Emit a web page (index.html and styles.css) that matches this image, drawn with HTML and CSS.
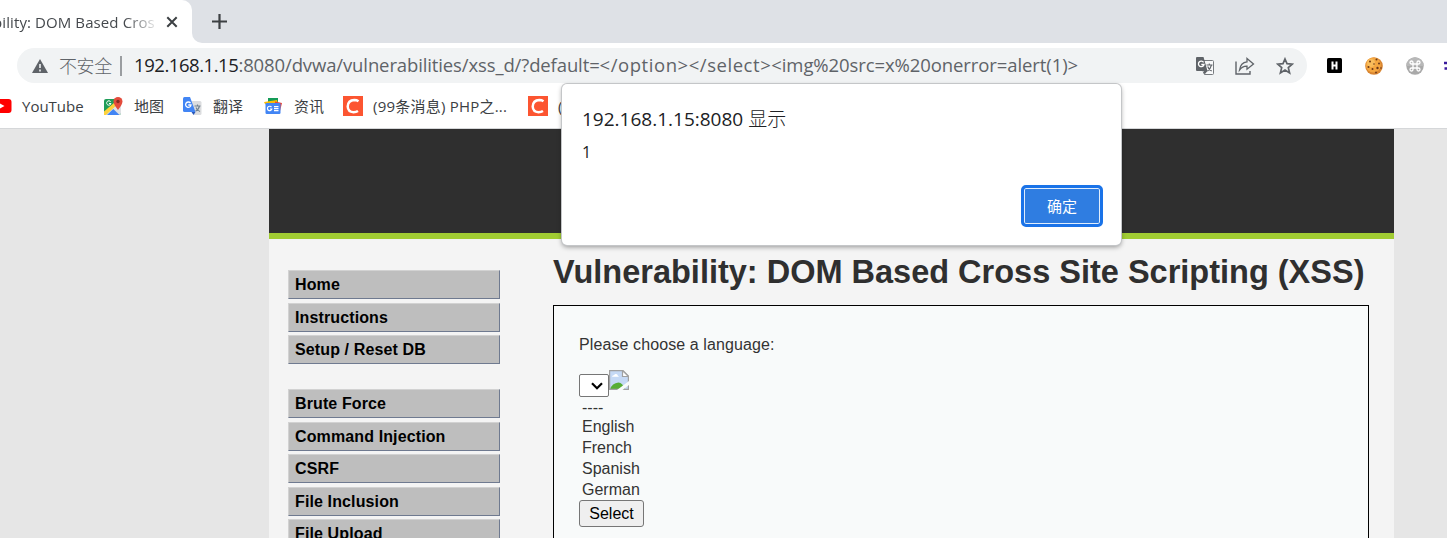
FILE: index.html
```html
<!DOCTYPE html>
<html lang="zh-CN">
<head>
<meta charset="utf-8">
<title>Vulnerability: DOM Based Cross Site Scripting (XSS)</title>
<link rel="stylesheet" href="styles.css">
</head>
<body>
<div class="tabstrip">
  <div class="tab">
    <div class="tab-title"><span>bility: DOM Based Cros</span></div>
    <svg class="tab-close" width="12" height="12" viewBox="0 0 12 12"><path d="M1.3 1.3 10.7 10.7M10.7 1.3 1.3 10.7" stroke="#3c4043" stroke-width="2" fill="none"/></svg>
  </div>
  <div class="strip-rest">
    <svg width="15" height="15" viewBox="0 0 15 15"><path d="M7.5 0v15M0 7.5h15" stroke="#3c4043" stroke-width="2.2" fill="none"/></svg>
  </div>
</div>

<div class="toolbar">
  <div class="omnibox">
    <svg class="warn" width="16" height="14" viewBox="0 0 16 14"><path d="M8 0 16 14H0z" fill="#5f6368"/><path d="M8 5v4M8 10.5v2" stroke="#f1f3f4" stroke-width="1.6"/></svg>
    <span class="insecure">不安全</span>
    <span class="divider"></span>
    <span class="url"><span class="host">192.168.1.15</span><span class="path">:8080/dvwa/vulnerabilities/xss_d/?default=</span><span class="close-tags">&lt;/option&gt;&lt;/select&gt;</span><span class="payload">&lt;img%20src=x%20onerror=alert(1)&gt;</span></span>
    <div class="actions">
      <svg width="18" height="18" viewBox="0 0 18 18"><path d="M8 3.5h8.5q1 0 1 1v12q0 1-1 1H8.500l-1.500-3" fill="#f8f9fa" stroke="#777b7f"/><path d="M1 0h6.500l4 14H1q-1 0-1-1V1q0-1 1-1z" fill="#5f6368"/><path d="M7.500 14h4L8.500 17.500z" fill="#5f6368"/><path d="M7.600 5.300A2.800 2.800 0 1 0 8 7.500H5.300" fill="none" stroke="#fff" stroke-width="1.300"/><path d="M10.500 8h6M13.300 6.500V8M15.500 8q-1 4-4 6M11.700 9.500q1 3 4 4.500" fill="none" stroke="#5f6368" stroke-width="1.100"/></svg>
      <svg width="20" height="18" viewBox="0 0 20 18"><path d="M1 4.500V17h14v-3" fill="none" stroke="#5f6368" stroke-width="1.400"/><path d="M12 1.500 18.500 7 12 12.200V9.200Q7.500 9 4.500 13 5.500 5.500 12 4.800z" fill="none" stroke="#5f6368" stroke-width="1.300"/></svg>
      <svg width="18" height="18" viewBox="0 0 18 18"><path d="M9 2 11 6.700 16.300 7.200 12.300 10.600 13.600 16 9 13.100 4.400 16 5.700 10.600 1.700 7.200 7 6.700z" fill="none" stroke="#5f6368" stroke-width="1.700"/></svg>
    </div>
  </div>
  <div class="extensions">
    <svg width="15" height="15" viewBox="0 0 15 15"><rect width="15" height="15" rx="1.500" fill="#000"/><path d="M5.500 3.500v8M9.500 3.500v8M5.500 7.500h4" stroke="#fff" stroke-width="2" fill="none"/></svg>
    <svg width="18" height="18" viewBox="0 0 18 18"><circle cx="9" cy="9" r="8.800" fill="#d98632"/><circle cx="8.300" cy="8" r="7.500" fill="#f4a640"/><circle cx="6" cy="6" r="4" fill="#f9bd5c"/><g fill="#6b3717"><circle cx="5" cy="4.500" r="1"/><circle cx="11.500" cy="2.500" r="1"/><circle cx="9" cy="7" r=".8"/><circle cx="14" cy="6.500" r="1"/><circle cx="3.500" cy="10" r="1"/><circle cx="7.500" cy="12" r="1"/><circle cx="12.500" cy="11" r="1.200"/><circle cx="11" cy="15.500" r=".9"/><circle cx="16" cy="11" r=".8"/></g></svg>
    <svg width="18" height="18" viewBox="0 0 18 18"><circle cx="9" cy="9" r="8.700" fill="#a9a9a9"/><path d="M.3 9a8.700 8.700 0 0 1 17.400 0z" fill="#b8b8b8"/><path d="M7 7h4v4H7zM7 7H5.500A1.500 1.500 0 1 1 7 5.500zM11 7V5.500A1.500 1.500 0 1 1 12.500 7zM11 11h1.500a1.500 1.500 0 1 1-1.500 1.500zM7 11v1.500A1.500 1.500 0 1 1 5.500 11z" fill="none" stroke="#fff" stroke-width="1.300"/></svg>
    <svg class="ext-cut" width="3" height="12" viewBox="0 0 3 12"><path d="M0 3h3M.5 8.500h2.500" stroke="#3a1a9c" stroke-width="2.500"/></svg>
  </div>
</div>

<div class="bookmarks">
  <svg class="yt" width="12" height="14" viewBox="0 0 12 14"><rect x="-8" width="19.500" height="14" rx="3" fill="#f00"/><path d="M-1 4 4.500 7-1 10z" fill="#fff"/></svg>
  <span class="bm bm-youtube">YouTube</span>
  <svg class="i-map" width="19" height="19" viewBox="0 0 19 19"><rect x="0" y="2" width="17" height="16" rx="2" fill="#1f9d58"/><path d="M0 18 17 3v13q0 2-2 2z" fill="#dfe1e5"/><path d="M0 14.500 14 2.500 16 5 2 18H0z" fill="#fdd23c"/><path d="M3 18 9.300 12 15.500 18z" fill="#4285f4"/><path d="M6.700 4.800A2.200 2.200 0 1 0 7 6.500H5" fill="none" stroke="#fff"/><path d="M14 0a4.500 4.500 0 0 1 4.500 4.500Q18.300 7.500 14 13 9.700 7.500 9.500 4.500A4.500 4.500 0 0 1 14 0z" fill="#e34b3c"/><circle cx="14" cy="4.500" r="1.700" fill="#852b21"/></svg>
  <span class="bm bm-map">地图</span>
  <svg class="i-tr" width="19" height="19" viewBox="0 0 19 19"><path d="M7 4h10q1.500 0 1.500 1.500v11q0 1.500-1.500 1.500H11z" fill="#dcdddf"/><path d="M1.500 0H7l5.500 15h-11Q0 15 0 13.500v-12Q0 0 1.500 0z" fill="#4285f4"/><path d="M8.500 15h4L10.500 18z" fill="#2857b8"/><path d="M7.500 6.100A2.700 2.700 0 1 0 8 8H5.300" fill="none" stroke="#fff" stroke-width="1.300"/><path d="M11.500 9h6M14.500 7.500V9M16.500 9q-1 4-4 5M13 10.500q1 3 4 4" fill="none" stroke="#71828f" stroke-width="1.100"/></svg>
  <span class="bm bm-tr">翻译</span>
  <svg class="i-news" width="18" height="16" viewBox="0 0 18 16"><path d="M4 0h10v7H4z" fill="#159c58"/><path d="M0 4 13 2l1 4H1z" fill="#fbbc04"/><path d="M11 3.500 18 5l-2 8h-5z" fill="#ea4335"/><rect x="1.500" y="5" width="15" height="11" rx="1.200" fill="#4285f4"/><path d="M7.500 9.200A2.200 2.200 0 1 0 7.800 11H6M10 8.700h4.500M10 10.700h4.500M10 12.700h4.500" fill="none" stroke="#fff" stroke-width="1.200"/></svg>
  <span class="bm bm-news">资讯</span>
  <svg class="i-c" width="20" height="20" viewBox="0 0 20 20"><rect width="20" height="20" fill="#fc5531"/><path d="M15.500 5.200Q13.700 4 11.300 4 5 4.300 4.700 10.500 5 16 10.500 16.200q2.700 0 4.500-1.200" fill="none" stroke="#fff" stroke-width="2.500"/></svg>
  <span class="bm bm-php">(99条消息) PHP之...</span>
  <svg class="i-c" width="20" height="20" viewBox="0 0 20 20"><rect width="20" height="20" fill="#fc5531"/><path d="M15.500 5.200Q13.700 4 11.300 4 5 4.300 4.700 10.500 5 16 10.500 16.200q2.700 0 4.500-1.200" fill="none" stroke="#fff" stroke-width="2.500"/></svg>
  <span class="bm bm-last">(</span>
</div>

<div class="viewport">
  <div class="container">
    <div class="header"></div>
    <div class="columns">
      <ul class="menu">
        <li>Home</li>
        <li>Instructions</li>
        <li class="group-end">Setup / Reset DB</li>
        <li>Brute Force</li>
        <li>Command Injection</li>
        <li>CSRF</li>
        <li>File Inclusion</li>
        <li>File Upload</li>
      </ul>
      <div class="main">
        <h1>Vulnerability: DOM Based Cross Site Scripting (XSS)</h1>
        <div class="panel">
          <p>Please choose a language:</p>
          <div class="choice">
            <div class="select"><svg width="12" height="8" viewBox="0 0 12 8"><path d="M1 1.200 6 6.200 11 1.200" fill="none" stroke="#000" stroke-width="2.200"/></svg></div>
            <svg class="broken" width="20" height="20" viewBox="0 0 20 20"><path d="M.6.600H14L19.400 6v13.400H.6z" fill="#c5d9f5"/><path d="M3 6.800q.3-1.800 2-1.500Q6 3.200 8 4.300q1 1 .8 1.500 1.200.3 1 1H3z" fill="#fff"/><path d="M1 19.500Q3 13 9.500 12.500q4 0 6.500 7z" fill="#56ad35"/><path d="M.6 20V.6H14L19.400 6v14M.6 19.400h19" fill="none" stroke="#a0a0a0" stroke-width="1.200"/><path d="M13.500.6V6.500h6z" fill="#fff" stroke="#a0a0a0" stroke-width="1.200"/><path d="M20 11v4L13.500 20H8z" fill="#f8fafa"/></svg>
          </div>
          <div class="options">
            <div class="blank">----</div><div>English</div><div>French</div><div>Spanish</div><div>German</div>
          </div>
          <button class="submit">Select</button>
        </div>
      </div>
    </div>
  </div>
</div>

<div class="dialog">
  <div class="dialog-title"><span class="origin">192.168.1.15:8080</span><span class="says">显示</span></div>
  <div class="message">1</div>
  <button class="ok">确定</button>
</div>
</body>
</html>
```
FILE: styles.css
```css
* { box-sizing: border-box; }
body {
  margin: 0;
  width: 1447px;
  height: 538px;
  overflow: hidden;
  display: flex;
  flex-direction: column;
  background: #e6e6e6;
  font-family: "Liberation Sans", Arial, sans-serif;
}
svg { display: block; flex: none; }

/* Browser chrome */
.tabstrip, .toolbar, .bookmarks, .dialog {
  font-family: "Open Sans", "Noto Sans CJK SC", sans-serif;
  white-space: nowrap;
}
.tabstrip { height: 43px; display: flex; background: #fff; flex: none; }
.tab {
  width: 192px;
  display: flex;
  align-items: center;
  background: linear-gradient(#dee1e6, #dee1e6) right top / 12px 12px no-repeat;
  position: relative;
}
.tab::before {
  content: "";
  position: absolute;
  inset: 0;
  background: #fff;
  border-top-right-radius: 10px;
}
.tab-title {
  position: relative;
  width: 158px;
  font-size: 15px;
  line-height: 20px;
  color: #45494d;
  overflow: hidden;
  -webkit-mask-image: linear-gradient(to right, #000 125px, transparent 160px);
  mask-image: linear-gradient(to right, #000 125px, transparent 160px);
}
.tab-title span { margin-left: -7px; letter-spacing: .1px; }
.tab-close { position: relative; margin-left: 8px; }
.strip-rest {
  flex: 1;
  padding: 14px 0 0 20px;
  background: #dee1e6;
  border-bottom-left-radius: 10px;
}
.toolbar { height: 41px; padding: 5px 0 1px 17px; display: flex; background: #fff; flex: none; }
.omnibox {
  width: 1290px;
  height: 35px;
  border-radius: 18px;
  background: #f1f3f4;
  display: flex;
  align-items: center;
  padding-left: 15px;
  color: #5f6368;
}
.insecure { font-size: 18px; font-weight: 300; line-height: 26px; margin-left: 11px; width: 61px; letter-spacing: -.4px; }
.divider { width: 2px; height: 20px; background: #9a9da0; }
.url { font-size: 18.500px; line-height: 26px; margin: 0 0 2px 12px; width: 1061px; display: flex; }
.host { color: #202124; letter-spacing: -.45px; }
.path { letter-spacing: -.12px; }
.close-tags { letter-spacing: .55px; }
.payload { letter-spacing: -.09px; }
.actions { display: flex; align-items: center; gap: 21px; margin-left: 1px; }
.extensions { display: flex; align-items: center; gap: 23px; padding-left: 20px; }
.ext-cut { margin-left: -3px; }
.bookmarks {
  height: 45px;
  display: flex;
  align-items: center;
  background: #fff;
  border-bottom: 1px solid #d5d7d9;
  flex: none;
}
.bm { font-size: 15px; line-height: 22px; color: #3c4043; flex: none; }
.bm-youtube { margin-left: 10px; width: 82px; }
.bm-map { margin-left: 11px; width: 49px; }
.bm-tr { margin-left: 11px; width: 50px; }
.i-news { margin-left: 1px; }
.bm-news { margin-left: 12px; width: 49px; }
.bm-php { margin-left: 10px; width: 155px; letter-spacing: .22px; }
.bm-last { margin-left: 10px; }

/* DVWA page */
.viewport { flex: 1; padding-left: 269px; min-height: 0; }
.container { width: 1125px; height: 409px; background: #f4f4f4; }
.header { height: 110px; background: #2f2f2f; border-bottom: 6px solid #a1cc33; }
.columns { display: flex; height: 299px; overflow: hidden; }
.menu { list-style: none; margin: 31px 0 0; padding: 0 0 0 19px; width: 284px; }
.menu li {
  width: 212px;
  height: 29px;
  margin-bottom: 3.500px;
  padding-left: 6px;
  border: 1px solid;
  border-color: #d2d2d2 #6f7a90 #6f7a90 #d2d2d2;
  background: #bebebe;
  color: #000;
  font-size: 16px;
  font-weight: bold;
  line-height: 27px;
  letter-spacing: .12px;
}
.menu .group-end { margin-bottom: 25px; }
.main { width: 816px; }
h1 { margin: 13px 0 12px; font-size: 32.500px; line-height: 41px; color: #2f2f2f; white-space: nowrap; }
.panel { height: 260px; border: 1px solid #000; background: #f8fafa; padding: 28px 25px 0; color: #333; font-size: 16px; }
.panel p { margin: 0; line-height: 21px; letter-spacing: .1px; }
.choice { display: flex; margin-top: 15px; height: 28px; }
.select {
  width: 30px;
  height: 23px;
  margin-top: 4px;
  border: 1px solid #767676;
  border-radius: 2px;
  background: #fff;
  padding: 7px 0 0 11px;
}
.options { padding-left: 3px; line-height: 21px; margin-top: -1px; }
.options .blank { height: 19px; }
.submit {
  display: block;
  width: 65px;
  height: 27px;
  padding: 0;
  border: 1px solid #767676;
  border-radius: 3px;
  background: #efefef;
  color: #000;
  font: 16px "Liberation Sans", Arial, sans-serif;
}

/* JavaScript alert */
.dialog {
  position: absolute;
  left: 562px;
  top: 84px;
  width: 559px;
  height: 161px;
  padding: 22px 18px 0 20px;
  border-radius: 5px;
  background: #fff;
  box-shadow: 0 0 0 1px #c4c6c8, 0 2px 5px rgba(0, 0, 0, .4);
  display: flex;
  flex-direction: column;
  color: #202124;
}
.dialog-title { display: flex; font-size: 19px; line-height: 26px; }
.says { margin-left: 5px; font-weight: 300; }
.message { font-size: 16px; line-height: 22px; margin-top: 9px; }
.ok {
  align-self: flex-end;
  width: 82px;
  height: 42px;
  margin-top: 22px;
  padding: 0 0 2px;
  border: 3px solid #1a73e8;
  border-radius: 5px;
  background: #2f7de1;
  box-shadow: inset 0 0 0 1px #e1edfc;
  color: #fff;
  font: 15px "Noto Sans CJK SC", sans-serif;
}
```
